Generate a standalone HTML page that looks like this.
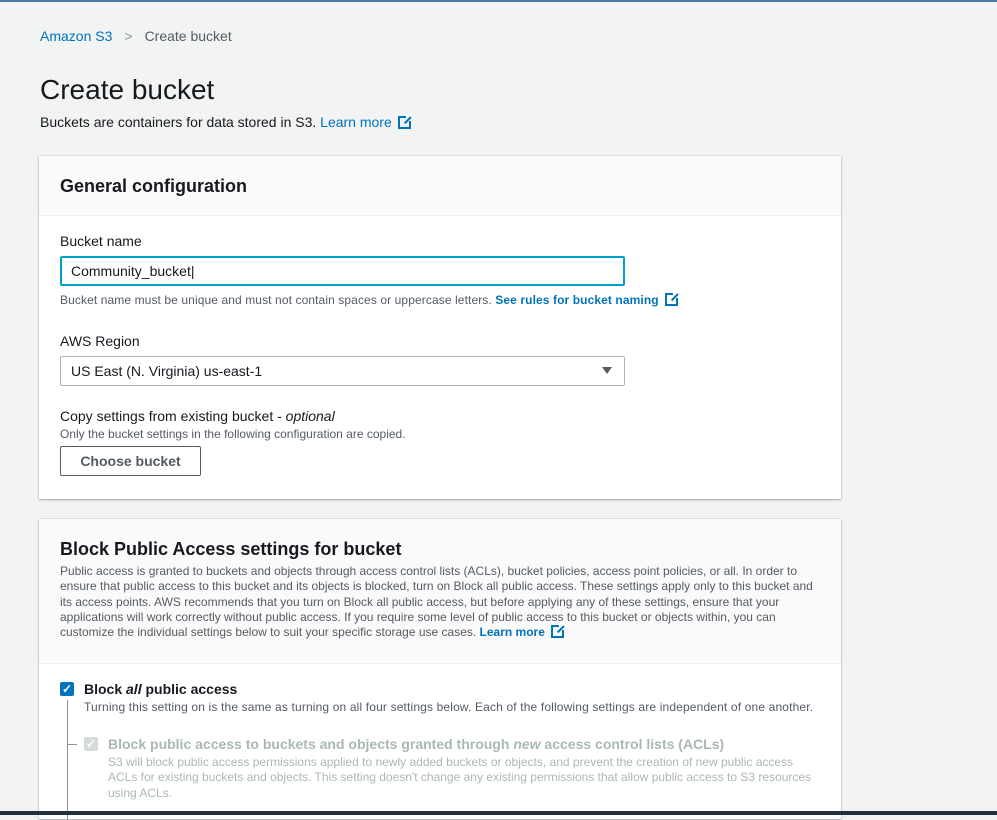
<!DOCTYPE html>
<html><head><style>
*{box-sizing:border-box;margin:0;padding:0}
body{width:997px;height:815px;overflow:hidden;background:#f2f3f3;font-family:"Liberation Sans",sans-serif;color:#16191f;position:relative}
.top{position:absolute;left:0;top:0;width:997px;height:2px;background:#4a7a9c}
.bot{position:absolute;left:0;top:811px;width:997px;height:4px;background:#232f3e}
.abs{position:absolute;white-space:nowrap}
a{color:#0073bb;text-decoration:none}
.card{position:absolute;left:39px;width:802px;background:#fff;box-shadow:0 1px 2px rgba(0,31,61,.3),0 0 1px rgba(0,28,36,.3)}
.hd{background:#fafafa;border-bottom:1px solid #eaeded}
.ext{display:inline-block;width:13px;height:13px;border:2px solid #0073bb;vertical-align:-2px;margin-left:6px;position:relative}
.ext:after{content:"";position:absolute;right:-3px;top:-3px;width:6px;height:6px;background:#fff}
.ext:before{content:"";position:absolute;right:-2px;top:-2px;width:9px;height:2px;background:#0073bb;transform:rotate(-45deg);transform-origin:right;z-index:1}
.cb{position:absolute;width:14px;height:14px;border-radius:2px;color:#fff;font-size:12px;line-height:14px;text-align:center;font-weight:bold}
</style></head><body>
<div class="top"></div>
<div class="abs" style="left:40px;top:28px;font-size:14px"><a>Amazon S3</a><span style="color:#879596;margin:0 12px">&gt;</span><span style="color:#545b64">Create bucket</span></div>
<div class="abs" style="left:40px;top:74px;font-size:28px;">Create bucket</div>
<div class="abs" style="left:40px;top:114px;font-size:14px">Buckets are containers for data stored in S3. <a>Learn more</a><span class="ext"></span></div>

<div class="card" style="top:156px;height:343px">
 <div class="hd" style="height:60px"></div>
 <div class="abs" style="left:21px;top:20px;font-size:18px;font-weight:bold">General configuration</div>
 <div class="abs" style="left:21px;top:77px;font-size:14px">Bucket name</div>
 <div class="abs" style="left:21px;top:100px;width:565px;height:30px;border:2px solid #00a1c9;border-radius:2px;font-size:14px;padding:5px 9px">Community_bucket|</div>
 <div class="abs" style="left:21px;top:137px;font-size:12px;color:#545b64;letter-spacing:0.1px">Bucket name must be unique and must not contain spaces or uppercase letters. <b style="color:#0073bb">See rules for bucket naming</b><span class="ext"></span></div>
 <div class="abs" style="left:21px;top:177px;font-size:14px">AWS Region</div>
 <div class="abs" style="left:21px;top:200px;width:565px;height:30px;border:1px solid #aab7b8;border-radius:2px;font-size:14px;padding:6px 10px">US East (N. Virginia) us-east-1<span style="position:absolute;right:12px;top:10px;border-left:5px solid transparent;border-right:5px solid transparent;border-top:7px solid #545b64"></span></div>
 <div class="abs" style="left:21px;top:252px;font-size:14px">Copy settings from existing bucket - <i>optional</i></div>
 <div class="abs" style="left:21px;top:271px;font-size:12px;color:#545b64">Only the bucket settings in the following configuration are copied.</div>
 <div class="abs" style="left:21px;top:290px;width:141px;height:30px;border:1px solid #545b64;border-radius:2px;font-size:14px;font-weight:bold;color:#545b64;text-align:center;line-height:28px">Choose bucket</div>
</div>

<div class="card" style="top:519px;height:300px">
 <div class="hd" style="height:145px"></div>
 <div class="abs" style="left:21px;top:20px;font-size:18px;font-weight:bold">Block Public Access settings for bucket</div>
 <div class="abs" style="left:21px;top:45px;font-size:12px;color:#545b64;line-height:15.3px;white-space:normal;width:758px">Public access is granted to buckets and objects through access control lists (ACLs), bucket policies, access point policies, or all. In order to ensure that public access to this bucket and its objects is blocked, turn on Block all public access. These settings apply only to this bucket and its access points. AWS recommends that you turn on Block all public access, but before applying any of these settings, ensure that your applications will work correctly without public access. If you require some level of public access to this bucket or objects within, you can customize the individual settings below to suit your specific storage use cases. <b style="color:#0073bb">Learn more</b><span class="ext"></span></div>
 <div class="cb" style="left:21px;top:163px;background:#0073bb">✓</div>
 <div class="abs" style="left:45px;top:162px;font-size:14px;font-weight:bold">Block <i>all</i> public access</div>
 <div class="abs" style="left:45px;top:181px;font-size:12px;color:#545b64;letter-spacing:0.15px">Turning this setting on is the same as turning on all four settings below. Each of the following settings are independent of one another.</div>
 <div class="abs" style="left:28px;top:181px;width:1px;height:120px;background:#879596"></div>
 <div class="abs" style="left:28px;top:225px;width:10px;height:1px;background:#879596"></div>
 <div class="cb" style="left:45px;top:218px;background:#d5dbdb">✓</div>
 <div class="abs" style="left:69px;top:217px;font-size:14px;font-weight:bold;color:#aab7b8">Block public access to buckets and objects granted through <i>new</i> access control lists (ACLs)</div>
 <div class="abs" style="left:69px;top:236px;font-size:12px;color:#aab7b8;line-height:15.3px;white-space:normal;width:705px">S3 will block public access permissions applied to newly added buckets or objects, and prevent the creation of new public access ACLs for existing buckets and objects. This setting doesn't change any existing permissions that allow public access to S3 resources using ACLs.</div>
</div>
<div class="bot"></div>
</body></html>
